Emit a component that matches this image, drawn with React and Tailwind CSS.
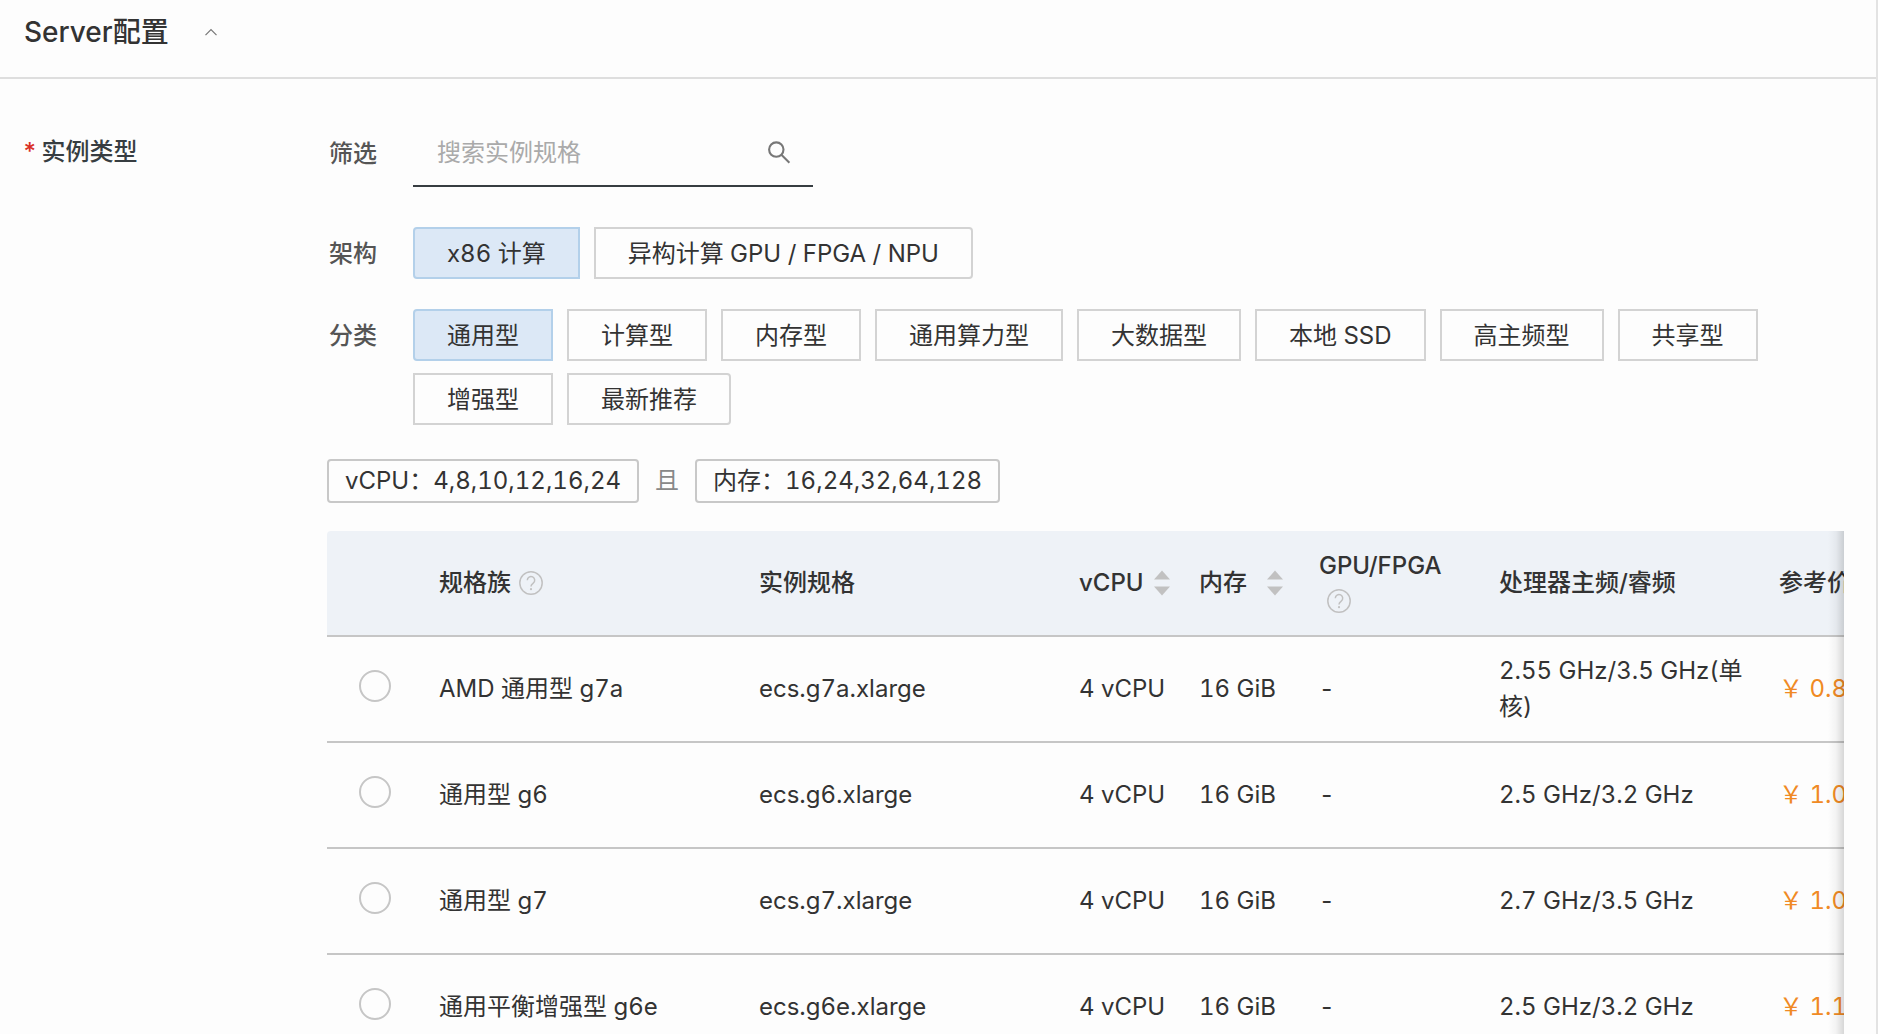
import { useState } from 'react';

const architectures = ['x86 计算', '异构计算 GPU / FPGA / NPU'];

const categories = [
  '通用型',
  '计算型',
  '内存型',
  '通用算力型',
  '大数据型',
  '本地 SSD',
  '高主频型',
  '共享型',
  '增强型',
  '最新推荐',
];

const instances = [
  { family: 'AMD 通用型 g7a', spec: 'ecs.g7a.xlarge', cpu: '2.55 GHz/3.5 GHz(单核)', price: '￥ 0.86' },
  { family: '通用型 g6', spec: 'ecs.g6.xlarge', cpu: '2.5 GHz/3.2 GHz', price: '￥ 1.05' },
  { family: '通用型 g7', spec: 'ecs.g7.xlarge', cpu: '2.7 GHz/3.5 GHz', price: '￥ 1.08' },
  { family: '通用平衡增强型 g6e', spec: 'ecs.g6e.xlarge', cpu: '2.5 GHz/3.2 GHz', price: '￥ 1.16' },
];

function HelpIcon() {
  return (
    <svg className="w-6 h-6" viewBox="0 0 24 24" fill="none" stroke="#c1c1c1" strokeWidth="1.5">
      <circle cx="12" cy="12" r="11.2" />
      <path d="M8.3 9.2a3.7 3.7 0 1 1 5.9 3c-1.4 1-2.2 1.5-2.2 3.2" />
      <circle cx="12" cy="18.2" r="1.1" fill="#c1c1c1" stroke="none" />
    </svg>
  );
}

function SortIcon() {
  return (
    <svg className="w-4 h-[26px] shrink-0" viewBox="0 0 16 26" fill="#c1c1c1">
      <path d="M8 0.5 16 9.5H0z" />
      <path d="M8 25.5 0 16.5h16z" />
    </svg>
  );
}

function OptionGroup({ label, options, value, onChange }) {
  return (
    <div className="flex" role="group" aria-label={label}>
      <span className="w-[86px] shrink-0 pt-0.5 pl-0.5 leading-[50px] font-medium text-[#555]">{label}</span>
      <div className="flex flex-wrap gap-x-[14px] gap-y-3">
        {options.map((option) => (
          <button
            key={option}
            type="button"
            aria-pressed={option === value}
            onClick={() => onChange(option)}
            className={
              'h-[52px] border-2 px-8 pt-0.5 whitespace-nowrap first:rounded-l-sm last:rounded-r-sm ' +
              (option === value ? 'border-[#b3d0ea] bg-[#dce8f6]' : 'border-[#d3d3d3]')
            }
          >
            {option}
          </button>
        ))}
      </div>
    </div>
  );
}

export default function App() {
  const [arch, setArch] = useState('x86 计算');
  const [category, setCategory] = useState('通用型');
  const [selected, setSelected] = useState(null);

  return (
    <div className="h-screen overflow-hidden border-r-2 border-[#e3e3e3] bg-[#fdfdfd] font-[Inter,'Noto_Sans_CJK_SC',sans-serif] text-2xl text-[#333] tabular-nums">
      <header className="flex items-center gap-9 border-b-2 border-[#dedede] px-6 pt-3 pb-[25px]">
        <h1 className="text-[28px] leading-10 font-medium">Server配置</h1>
        <button type="button" aria-label="收起">
          <svg className="w-3 h-2" viewBox="0 0 12 8" fill="none" stroke="#777" strokeWidth="1.2">
            <path d="M0.5 7.2 6 1.6 11.5 7.2" />
          </svg>
        </button>
      </header>

      <section className="flex pt-[38px] pr-8">
        <h2 className="w-[327px] shrink-0 pl-[22px] leading-[70px] font-medium text-[#373d41]">
          <span className="mr-1 text-[#d93026]">*</span>
          实例类型
        </h2>

        <div className="min-w-0 grow">
          <div className="flex items-center">
            <label htmlFor="filter" className="w-[86px] shrink-0 pt-1 pl-0.5 font-medium text-[#555]">
              筛选
            </label>
            <div className="flex w-[400px] items-center border-b-2 border-[#373d41] pt-0.5 pr-[22px] pl-6">
              <input
                id="filter"
                type="text"
                placeholder="搜索实例规格"
                className="h-[66px] min-w-0 grow bg-transparent outline-none placeholder:text-[#aaa]"
              />
              <svg className="w-6 h-6 shrink-0" viewBox="0 0 24 24" fill="none" stroke="#777" strokeWidth="2.1">
                <circle cx="9.3" cy="9.6" r="7.2" />
                <path d="m14.4 14.8 8 8" />
              </svg>
            </div>
          </div>

          <div className="mt-10 flex flex-col gap-[30px]">
            <OptionGroup label="架构" options={architectures} value={arch} onChange={setArch} />
            <OptionGroup label="分类" options={categories} value={category} onChange={setCategory} />
          </div>

          <div className="mt-[34px] flex items-center gap-4 leading-10">
            <button type="button" className="rounded-sm border-2 border-[#c8c8c8] px-4">
              vCPU：4,8,10,12,16,24
            </button>
            <span className="text-[#888]">且</span>
            <button type="button" className="rounded-sm border-2 border-[#c8c8c8] px-4">
              内存：16,24,32,64,128
            </button>
          </div>

          <div className="relative mt-7 overflow-hidden rounded-tl">
            <table className="w-[1616px] table-fixed text-left leading-9">
              <colgroup>
                <col className="w-24" />
                <col className="w-[320px]" />
                <col className="w-[320px]" />
                <col className="w-[120px]" />
                <col className="w-[120px]" />
                <col className="w-[180px]" />
                <col className="w-[280px]" />
                <col className="w-[180px]" />
              </colgroup>
              <thead className="bg-[#eef2f7]">
                <tr className="h-[105px] border-b-2 border-[#c6c6c6] *:px-4 *:font-medium">
                  <th aria-label="选择" />
                  <th>
                    <div className="flex items-center gap-2">
                      规格族
                      <HelpIcon />
                    </div>
                  </th>
                  <th>实例规格</th>
                  <th>
                    <div className="flex items-center gap-2.5">
                      vCPU
                      <SortIcon />
                    </div>
                  </th>
                  <th>
                    <div className="flex items-center gap-5">
                      内存
                      <SortIcon />
                    </div>
                  </th>
                  <th>
                    GPU/FPGA
                    <div className="flex h-[34px] items-center pl-2">
                      <HelpIcon />
                    </div>
                  </th>
                  <th>处理器主频/睿频</th>
                  <th>参考价格</th>
                </tr>
              </thead>
              <tbody>
                {instances.map((item) => (
                  <tr key={item.spec} className="h-[106px] border-b-2 border-[#c6c6c6] *:px-4">
                    <td>
                      <input
                        type="radio"
                        name="instance"
                        aria-label={item.spec}
                        checked={selected === item.spec}
                        onChange={() => setSelected(item.spec)}
                        className="mx-4 mb-1.5 block size-8 appearance-none rounded-full border-2 border-[#c6c6c6] checked:border-8 checked:border-[#0070cc]"
                      />
                    </td>
                    <td>{item.family}</td>
                    <td>{item.spec}</td>
                    <td className="whitespace-nowrap">4 vCPU</td>
                    <td className="whitespace-nowrap">16 GiB</td>
                    <td>-</td>
                    <td>{item.cpu}</td>
                    <td className="whitespace-nowrap text-[#f08a24]">{item.price}</td>
                  </tr>
                ))}
              </tbody>
            </table>
            <div className="pointer-events-none absolute inset-y-0 right-0 w-4 bg-linear-to-r from-transparent via-black/4 to-black/15" />
          </div>
        </div>
      </section>
    </div>
  );
}
